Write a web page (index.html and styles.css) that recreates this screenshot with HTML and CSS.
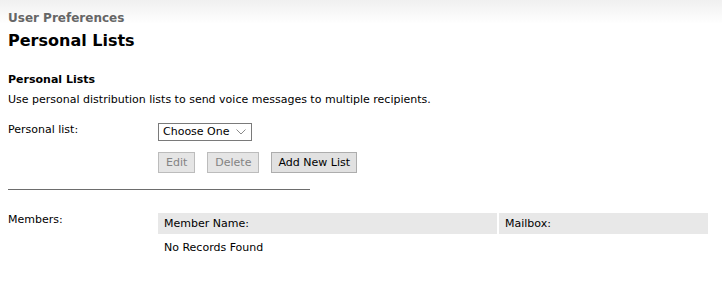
FILE: index.html
```html
<!DOCTYPE html>
<html lang="en">
<head>
    <meta charset="UTF-8">
    <title>Personal Lists</title>
    <link rel="stylesheet" href="styles.css">
</head>
<body>
    <div class="page-header">
        <div class="crumb">User Preferences</div>
        <h1>Personal Lists</h1>
    </div>

    <div class="content">
        <h2>Personal Lists</h2>
        <p class="intro">Use personal distribution lists to send voice messages to multiple recipients.</p>

        <div class="form-row">
            <label class="field-label">Personal list:</label>
            <div class="field">
                <div class="select-box">
                    <span>Choose One</span>
                    <svg class="chevron" width="10" height="6" viewBox="0 0 10 6"><path d="M0.5 0.5 L5 5 L9.5 0.5" fill="none" stroke="#8a8a8a" stroke-width="1"/></svg>
                </div>
                <div class="buttons">
                    <button type="button" class="btn" disabled>Edit</button>
                    <button type="button" class="btn" disabled>Delete</button>
                    <button type="button" class="btn add">Add New List</button>
                </div>
            </div>
        </div>

        <hr class="divider">

        <div class="form-row members">
            <label class="field-label">Members:</label>
            <table class="members-table">
                <thead>
                    <tr>
                        <th class="col-name">Member Name:</th>
                        <th>Mailbox:</th>
                    </tr>
                </thead>
                <tbody>
                    <tr>
                        <td colspan="2">No Records Found</td>
                    </tr>
                </tbody>
            </table>
        </div>
    </div>
</body>
</html>
```

FILE: styles.css
```css
html, body {
    margin: 0;
    background: #fff;
    font-family: "DejaVu Sans", Verdana, sans-serif;
    font-size: 11px;
    color: #000;
}

.page-header {
    background: linear-gradient(#f0f0f0, #ffffff 24px);
    padding: 11px 8px 0;
}

.crumb {
    font-size: 12px;
    font-weight: bold;
    color: #666;
    line-height: 14px;
}

h1 {
    margin: 6px 0 0;
    font-size: 16px;
    line-height: 20px;
}

.content {
    padding: 0 8px;
}

h2 {
    margin: 22px 0 0;
    font-size: 11px;
    line-height: 14px;
}

.intro {
    margin: 6px 0 0;
    line-height: 14px;
}

.form-row {
    display: flex;
    margin-top: 16px;
}

.field-label {
    width: 150px;
    line-height: 14px;
}

.field {
    display: flex;
    flex-direction: column;
    align-items: flex-start;
}

.select-box {
    display: flex;
    align-items: center;
    gap: 6px;
    height: 16px;
    padding: 0 5px 0 4px;
    border: 1px solid #7a7a7a;
    line-height: 16px;
}

.chevron {
    display: block;
}

.buttons {
    display: flex;
    gap: 12px;
    margin-top: 11px;
}

.btn {
    height: 21px;
    padding: 0 7px;
    background: #e1e1e1;
    border: 1px solid #adadad;
    font-family: inherit;
    font-size: 11px;
    color: #000;
}

.btn:disabled {
    color: #838383;
    background: #e5e5e5;
    border-color: #bcbcbc;
}

.btn.add {
    padding: 0 6px;
}

.divider {
    width: 302px;
    margin: 16px 0 0;
    border: 0;
    border-top: 1px solid #6d6d6d;
}

.members {
    margin-top: 23px;
}

.members-table {
    flex: 1;
    border-collapse: separate;
    border-spacing: 0;
    margin-right: 6px;
}

.members-table th {
    text-align: left;
    font-weight: normal;
    background: #e8e8e8;
    height: 21px;
    padding: 0 6px;
    color: #000;
}

.members-table th.col-name {
    width: 327px;
    border-right: 2px solid #fff;
}

.members-table td {
    padding: 7px 6px;
}
```
